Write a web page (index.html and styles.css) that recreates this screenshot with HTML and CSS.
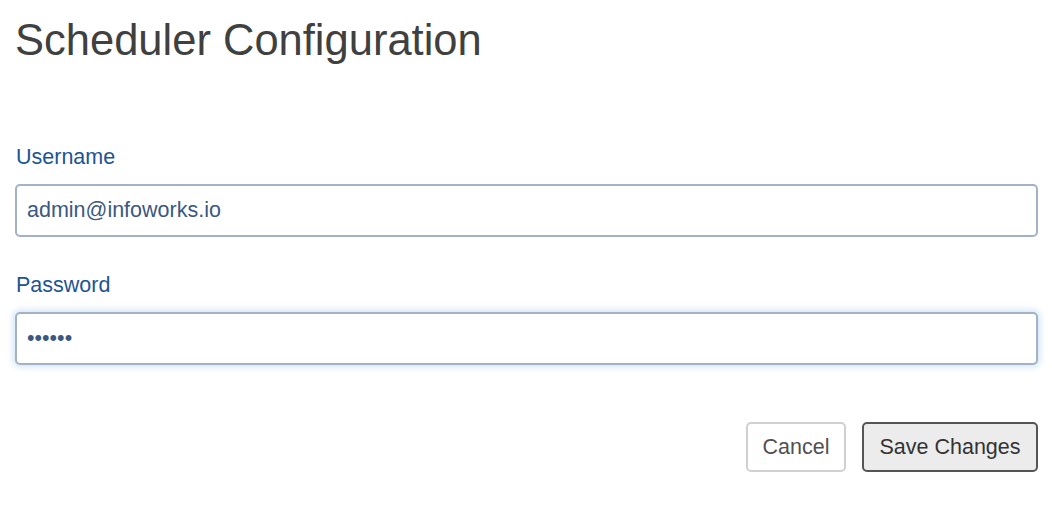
FILE: index.html
```html
<!DOCTYPE html>
<html>
<head>
<meta charset="utf-8">
<link rel="stylesheet" href="styles.css">
</head>
<body>
<div class="page">
  <h1 class="title">Scheduler Configuration</h1>
  <form class="form">
    <div class="field">
      <label class="label" for="username">Username</label>
      <input class="input" id="username" type="text" value="admin@infoworks.io">
    </div>
    <div class="field">
      <label class="label" for="password">Password</label>
      <input class="input input-focus" id="password" type="password" value="secret">
    </div>
    <div class="actions">
      <button type="button" class="btn btn-cancel">Cancel</button>
      <button type="button" class="btn btn-save">Save Changes</button>
    </div>
  </form>
</div>
</body>
</html>
```

FILE: styles.css
```css
html, body {
  margin: 0;
  padding: 0;
  background: #ffffff;
}
body {
  font-family: "Liberation Sans", Arial, sans-serif;
}
.page {
  padding: 0 14px 0 15px;
}
.title {
  margin: 0;
  padding-top: 14px;
  font-size: 43.5px;
  font-weight: 400;
  line-height: 52px;
  color: #404040;
}
.form {
  margin-top: 78px;
}
.field {
  display: flex;
  flex-direction: column;
  margin-bottom: 35px;
}
.label {
  font-size: 21.5px;
  line-height: 24px;
  color: #1d5592;
  margin: 1px 0 15px 1px;
}
.input {
  box-sizing: border-box;
  height: 53px;
  width: 100%;
  border: 2px solid #a3b2c5;
  border-radius: 5px;
  padding: 0 10px;
  font-family: "Liberation Sans", Arial, sans-serif;
  font-size: 21.5px;
  color: #3a5880;
  background: #fff;
  outline: none;
}
.input-focus {
  box-shadow: 0 0 6px 2px rgba(150, 195, 240, 0.45);
}
.actions {
  display: flex;
  justify-content: flex-end;
  gap: 16px;
  margin-top: 57px;
  margin-right: 0;
}
.btn {
  box-sizing: border-box;
  height: 50px;
  padding: 0;
  font-family: "Liberation Sans", Arial, sans-serif;
  font-size: 21.5px;
  border-radius: 5px;
  cursor: pointer;
}
.btn-cancel {
  width: 100px;
  background: #ffffff;
  border: 2px solid #d0d0d0;
  color: #505050;
}
.btn-save {
  width: 176px;
  background: #ececec;
  border: 2px solid #555555;
  color: #333333;
}
```
